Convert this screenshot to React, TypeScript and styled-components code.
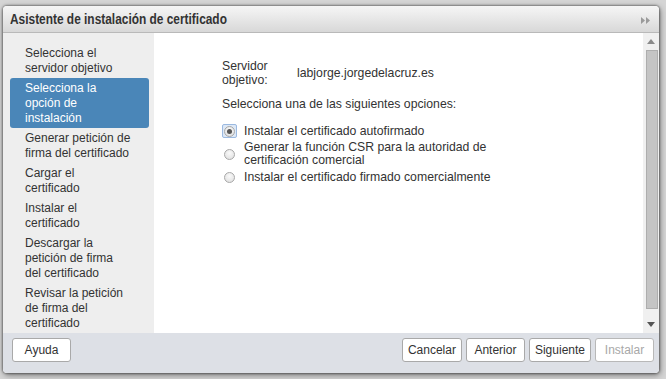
import { createGlobalStyle } from "styled-components";
import styled from "styled-components";

const NAV_ITEMS: { lines: string[]; active?: boolean }[] = [
  { lines: ["Selecciona el", "servidor objetivo"] },
  { lines: ["Selecciona la", "opción de", "instalación"], active: true },
  { lines: ["Generar petición de", "firma del certificado"] },
  { lines: ["Cargar el", "certificado"] },
  { lines: ["Instalar el", "certificado"] },
  { lines: ["Descargar la", "petición de firma", "del certificado"] },
  { lines: ["Revisar la petición", "de firma del", "certificado"] },
];

const OPTIONS: { lines: string[]; checked?: boolean }[] = [
  { lines: ["Instalar el certificado autofirmado"], checked: true },
  {
    lines: [
      "Generar la función CSR para la autoridad de",
      "certificación comercial",
    ],
  },
  { lines: ["Instalar el certificado firmado comercialmente"] },
];

const App = () => {
  return (
    <>
      <GlobalStyle />
      <Page>
        <Dialog>
          <Header>
            <Title>Asistente de instalación de certificado</Title>
            <Collapse>
              <svg width="9" height="7" viewBox="0 0 9 7">
                <path d="M0 0 L4 3.5 L0 7 Z M5 0 L9 3.5 L5 7 Z" fill="#9a9a9a" />
              </svg>
            </Collapse>
          </Header>
          <Body>
            <Nav>
              {NAV_ITEMS.map((item, i) => (
                <NavItem key={i} $active={item.active}>
                  {item.lines.map((l, j) => (
                    <div key={j}>{l}</div>
                  ))}
                </NavItem>
              ))}
            </Nav>
            <Content>
              <ServerRow>
                <ServerLabel>
                  Servidor
                  <br />
                  objetivo:
                </ServerLabel>
                <ServerValue>labjorge.jorgedelacruz.es</ServerValue>
              </ServerRow>
              <Prompt>Selecciona una de las siguientes opciones:</Prompt>
              <Options>
                {OPTIONS.map((opt, i) => (
                  <OptionRow key={i}>
                    <RadioWrap $focused={opt.checked}>
                      <Radio $checked={opt.checked} />
                    </RadioWrap>
                    <OptionText>
                      {opt.lines.map((l, j) => (
                        <div key={j}>{l}</div>
                      ))}
                    </OptionText>
                  </OptionRow>
                ))}
              </Options>
            </Content>
            <Scrollbar>
              <Arrow>
                <svg width="8" height="5" viewBox="0 0 8 5">
                  <path d="M0 5 L4 0 L8 5 Z" fill="#8a8a8a" />
                </svg>
              </Arrow>
              <Thumb />
              <Arrow>
                <svg width="8" height="5" viewBox="0 0 8 5">
                  <path d="M0 0 L4 5 L8 0 Z" fill="#555" />
                </svg>
              </Arrow>
            </Scrollbar>
          </Body>
          <Footer>
            <Button>Ayuda</Button>
            <FooterRight>
              <Button>Cancelar</Button>
              <Button>Anterior</Button>
              <Button>Siguiente</Button>
              <Button disabled>Instalar</Button>
            </FooterRight>
          </Footer>
        </Dialog>
      </Page>
    </>
  );
};

const GlobalStyle = createGlobalStyle`
  html, body {
    margin: 0;
    background: #d5d5d5;
  }
  body {
    font-family: "Liberation Sans", Arial, sans-serif;
    font-size: 12px;
    color: #333;
  }
`;

const Page = styled.div`
  width: 666px;
  height: 379px;
  padding: 6px 0 0 3px;
  box-sizing: border-box;
`;

const Dialog = styled.div`
  width: 656px;
  height: 367px;
  display: flex;
  flex-direction: column;
  border-radius: 4px;
  overflow: hidden;
  background: #fff;
  box-shadow: 0 0 2px 1px rgba(0, 0, 0, 0.35), 1px 2px 6px rgba(0, 0, 0, 0.45);
`;

const Header = styled.div`
  height: 26px;
  flex: none;
  display: flex;
  align-items: center;
  justify-content: space-between;
  padding: 0 9px 0 7px;
  background: linear-gradient(#f6f6f6, #d8d8d8);
  border-bottom: 1px solid #b9b9b9;
`;

/* the original uses a narrow face; squeeze Liberation Sans to its width */
const Title = styled.div`
  font-size: 14px;
  font-weight: bold;
  color: #333;
  transform: scaleX(0.85);
  transform-origin: left center;
  white-space: nowrap;
`;

const Collapse = styled.div`
  display: flex;
  align-items: center;
  padding-top: 2px;
`;

const Body = styled.div`
  flex: 1;
  display: flex;
  min-height: 0;
  overflow: hidden;
`;

const Nav = styled.div`
  width: 151px;
  flex: none;
  background: #eeeeee;
  padding-top: 10px;
  box-sizing: border-box;
`;

const NavItem = styled.div<{ $active?: boolean }>`
  margin: 0 5px 0 7px;
  padding: 3px 4px 2px 15px;
  line-height: 15px;
  border-radius: 3px;
  white-space: nowrap;
  color: ${(p) => (p.$active ? "#fff" : "#333")};
  background: ${(p) => (p.$active ? "#4a86b8" : "transparent")};
`;

const Content = styled.div`
  flex: 1;
  background: #fff;
  padding: 26px 0 0 68px;
  font-size: 12.25px;
`;

const ServerRow = styled.div`
  display: flex;
  align-items: center;
  line-height: 14px;
`;

const ServerLabel = styled.div`
  width: 75px;
`;

const ServerValue = styled.div``;

const Prompt = styled.div`
  margin-top: 10px;
  line-height: 14px;
`;

const Options = styled.div`
  margin-top: 13px;
  display: flex;
  flex-direction: column;
  gap: 3px;
`;

const OptionRow = styled.div`
  display: flex;
  align-items: center;
  gap: 7px;
`;

const RadioWrap = styled.span<{ $focused?: boolean }>`
  width: 15px;
  height: 14px;
  display: flex;
  align-items: center;
  justify-content: center;
  border-radius: 2px;
  box-sizing: border-box;
  border: 1px solid ${(p) => (p.$focused ? "#9bb9e0" : "transparent")};
  background: ${(p) => (p.$focused ? "#dde8f6" : "transparent")};
`;

const Radio = styled.span<{ $checked?: boolean }>`
  width: 11px;
  height: 11px;
  border-radius: 50%;
  box-sizing: border-box;
  border: 1px solid #a8a8a8;
  background: radial-gradient(circle at 50% 35%, #fafafa, #dcdcdc);
  display: flex;
  align-items: center;
  justify-content: center;
  &::after {
    content: "";
    width: 5px;
    height: 5px;
    border-radius: 50%;
    background: #555;
    display: ${(p) => (p.$checked ? "block" : "none")};
  }
`;

const OptionText = styled.div`
  line-height: 13px;
`;

const Scrollbar = styled.div`
  width: 16px;
  flex: none;
  background: #f0f0f0;
  display: flex;
  flex-direction: column;
  align-items: center;
  padding: 4px 0;
  box-sizing: border-box;
`;

const Arrow = styled.div`
  height: 9px;
  display: flex;
  align-items: center;
  justify-content: center;
`;

const Thumb = styled.div`
  flex: 1;
  width: 12px;
  margin: 4px 0 11px 1px;
  background: #c4c4c4;
  border: 1px solid #adadad;
  box-sizing: border-box;
`;

const Footer = styled.div`
  height: 40px;
  flex: none;
  display: flex;
  justify-content: space-between;
  align-items: flex-start;
  padding: 5px 5px 0 9px;
  background: #dde0e6;
  box-sizing: border-box;
`;

const FooterRight = styled.div`
  display: flex;
  gap: 4px;
`;

const Button = styled.button`
  min-width: 59px;
  height: 24px;
  padding: 0 5px;
  background: #fff;
  border: 1px solid #a9a9a9;
  border-radius: 3px;
  font-family: "Liberation Sans", Arial, sans-serif;
  font-size: 12px;
  color: #333;
  &:disabled {
    color: #a8a8a8;
    border-color: #b8b8b8;
  }
`;

export default App;
